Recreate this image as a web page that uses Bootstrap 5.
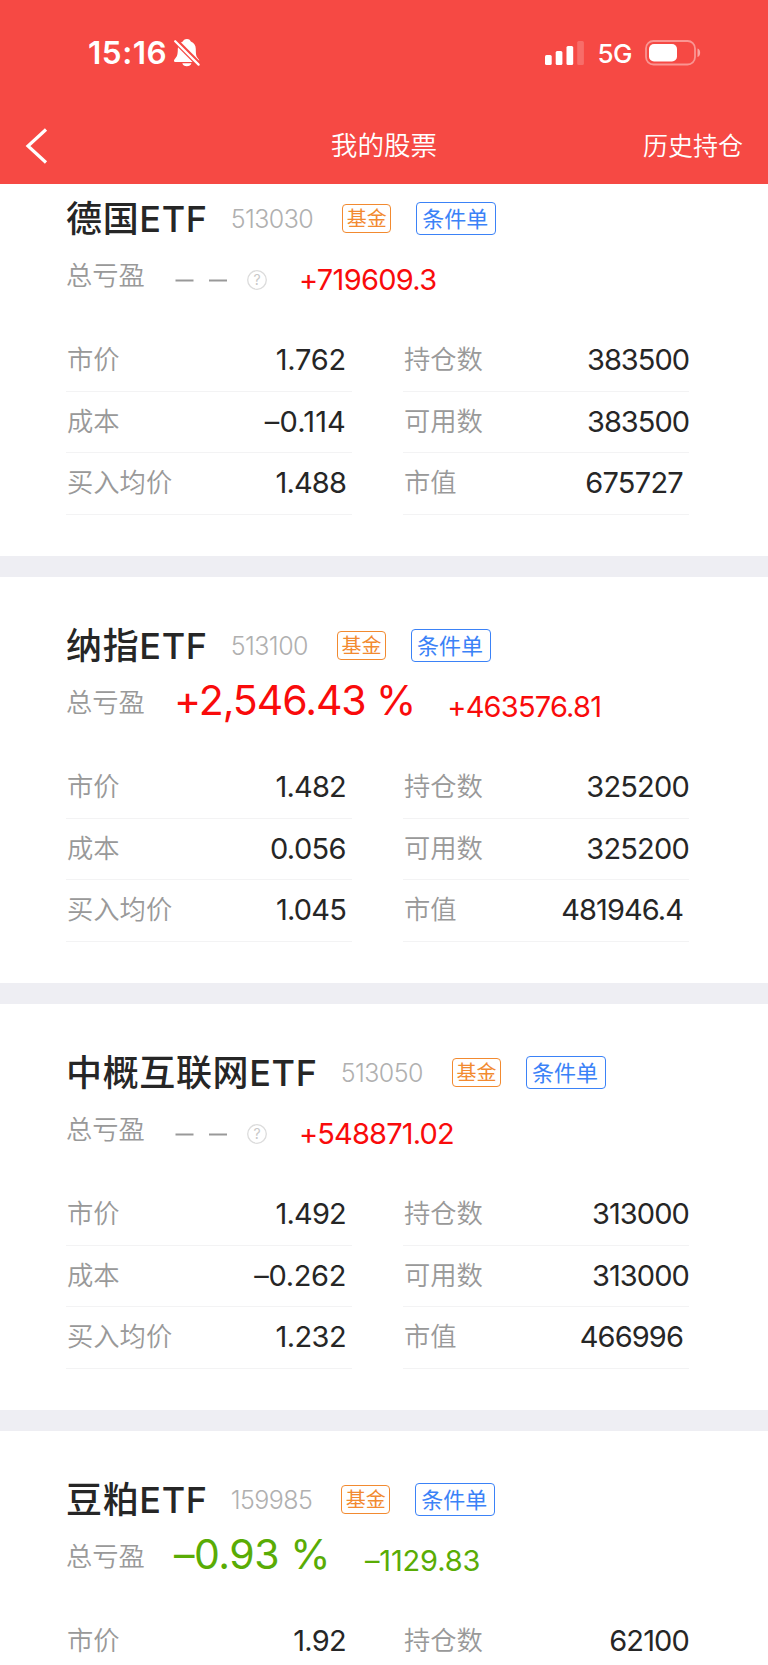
<!DOCTYPE html>
<html lang="zh-CN">
<head>
<meta charset="utf-8">
<meta name="viewport" content="width=device-width, initial-scale=1">
<title>我的股票</title>
<link href="https://cdn.jsdelivr.net/npm/bootstrap@5.3.0/dist/css/bootstrap.min.css" rel="stylesheet">
<style>
body{font-family:Inter,"Noto Sans CJK SC",sans-serif;background:#fff;color:#262626;height:1665px;overflow:hidden}
.app-head{background:#f64944;height:184px;color:#fff}
.status{height:106px;padding:0 67px 0 88px}
.clock{font-size:31.5px;font-weight:600;line-height:40px;letter-spacing:.5px;width:86px;white-space:nowrap}
.net{font-size:26px;font-weight:500;line-height:40px;margin:0 13px 0 13px;letter-spacing:-.5px;padding-top:1px}
.titlebar{height:78px;display:grid;grid-template-columns:1fr auto 1fr;font-family:"Noto Sans CJK SC",sans-serif;font-weight:350;padding:0 25px 2px 25px}
.titlebar h1{font-size:26.6px;font-weight:350;line-height:40px}
.history{font-size:25px;line-height:40px}
#list{height:1481px;overflow:hidden}
.holding{height:427px;border-bottom:21px solid #eeeef3;padding:45px 78px 0 66px}
.holding.cut{height:393px;padding-top:11px}
.name-row{height:46px}
.stock-name{font-size:36px;font-weight:500;line-height:46px;letter-spacing:.65px;padding-top:2px}
.code{font-size:25px;font-weight:300;color:#b0b0b0;line-height:46px;margin-left:23px;letter-spacing:-.55px;padding-top:2px}
.tag{border:1.5px solid;border-radius:4px;font-family:"Noto Sans CJK SC",sans-serif;text-align:center;white-space:nowrap}
.tag-fund{color:#f28a30;width:49px;height:29px;font-size:20px;line-height:26px;margin-left:29px}
.tag-cond{color:#3b82f7;width:80px;height:33px;font-size:22px;line-height:29px;margin-left:25px;padding-right:2px}
.profit{height:89px}
.lbl{font-family:"Noto Sans CJK SC",sans-serif;font-weight:350;font-size:26.3px;color:#999}
.profit .lbl{line-height:40px;margin-top:13px;width:108px}
.pct{font-size:41px;line-height:60px;margin-top:2px;margin-right:35px}
.pct.up{margin-right:32px}
.amt{font-size:29px;line-height:40px;margin-top:19px}
.amt,.val,.pct{letter-spacing:var(--track)}
.up{color:#f90b0b}.down{color:#59ac05}
.nodata{width:124px;height:20px;margin:29px 0 0 1px}
.figures{display:grid;grid-template-columns:286px 286px;column-gap:51px}
.fig{height:61.4px;border-bottom:1.5px solid #f3f3f4}
.figures>.fig:nth-child(-n+2){height:62px}
.fig .lbl{line-height:40px;padding:8px 0 0 1px}
.val{font-size:29px;line-height:40px;padding-top:10px}
.inset{padding-right:6px}
</style>
</head>
<body>
<header class="app-head">
  <div class="status d-flex align-items-center">
    <span class="clock">15:16</span>
    <svg width="27" height="28" viewBox="0 0 27 28"><path fill="#fff" d="M13 0c-2.400 0-3.800 1.400-4.200 2.500-3.500 1.200-5 4.300-5 7.400 0 5.800-.8 7.200-2.200 9C.3 20.500 0 20.800 0 21.800c0 .9.700 1.200 1.500 1.200h22.200c.9 0 1.500-.5 1.500-1.200 0-1-.8-1.700-1.700-3-1.300-1.800-1.700-3.500-1.700-8.900 0-3.100-1.600-6.300-5-7.400C16.500 1.400 15.200 0 13 0ZM8.300 24.300c.4 2 2.200 3 4.500 3s4.200-1 4.600-3Z"/><path d="M1.200 1.500 24.500 25" stroke="#f64944" stroke-width="5.500"/><path d="M1.200 2.200 24.600 25.600" stroke="#fff" stroke-width="2.200" stroke-linecap="round"/></svg>
    <svg class="ms-auto" width="39" height="24" viewBox="0 0 39 24" fill="#fff"><rect y="14" width="6.700" height="10" rx="1.500"/><rect x="10.700" y="10" width="6.700" height="14" rx="1.500"/><rect x="21.500" y="5" width="6.700" height="19" rx="1.500"/><rect x="32.200" width="6.700" height="24" rx="1.500" opacity=".2"/></svg>
    <span class="net">5G</span>
    <svg width="56" height="26" viewBox="0 0 56 26"><rect x="1" y="1" width="49" height="23.500" rx="7.500" fill="none" stroke="#fff" stroke-opacity=".42" stroke-width="1.800"/><rect x="4" y="4" width="28" height="17.500" rx="5" fill="#fff"/><path d="M52.500 8.500c3.500 1 3.500 7.500 0 8.500z" fill="#fff" opacity=".5"/></svg>
  </div>
  <div class="titlebar align-items-center">
    <svg class="mt-1" width="24" height="36" viewBox="0 0 24 36"><path d="M21 1.500 3 18l18 16.500" fill="none" stroke="#fff" stroke-width="3.200"/></svg>
    <h1 class="m-0">我的股票</h1>
    <span class="history text-end">历史持仓</span>
  </div>
</header>
<main id="list"></main>
<script src="https://cdn.jsdelivr.net/npm/bootstrap@5.3.0/dist/js/bootstrap.bundle.min.js"></script>
<script>
// Each figure is [text, tracking in px]
const holdings = [
  {name:'德国ETF', code:'513030', amt:['+719609.3',-.7], dir:'up', l:[['1.762',-.2],['–0.114',.15],['1.488',-.85]], r:[['383500',-1],['383500',-1],['675727',-.75]]},
  {name:'纳指ETF', code:'513100', pct:['+2,546.43 %',-1.05], amt:['+463576.81',-.8], dir:'up', l:[['1.482',-.8],['0.056',-.6],['1.045',-.8]], r:[['325200',-.8],['325200',-.8],['481946.4',-.95]]},
  {name:'中概互联网ETF', code:'513050', amt:['+548871.02',-.85], dir:'up', l:[['1.492',-.8],['–0.262',-.35],['1.232',-.6]], r:[['313000',-.9],['313000',-.9],['466996',-.9]]},
  {name:'豆粕ETF', code:'159985', pct:['–0.93 %',-.5], amt:['–1129.83',-.15], dir:'down', l:[['1.92',-.7]], r:[['62100',-.85]]}
];
const L = ['市价','成本','买入均价'], R = ['持仓数','可用数','市值'];
const nodata = `<svg class="nodata" viewBox="0 0 124 20"><path d="M.5 10.500h18M34 10.500h18" stroke="#999" stroke-width="1.900"/><circle cx="82" cy="10" r="9.300" fill="none" stroke="#dcdcdc" stroke-width="1.300"/><text x="82" y="15" font-size="14" text-anchor="middle" fill="#c8c8c8">?</text></svg>`;
const num = (v, cls) => `<span class="${cls}" style="--track:${v[1]}px">${v[0]}</span>`;
const fig = (label, value, inset) => `<div class="fig d-flex justify-content-between"><span class="lbl">${label}</span>${num(value, inset ? 'val inset' : 'val')}</div>`;
document.getElementById('list').innerHTML = holdings.map((h, i) => `
<section class="holding ${i ? '' : 'cut'}">
  <div class="name-row d-flex align-items-center"><span class="stock-name">${h.name}</span><span class="code">${h.code}</span><span class="tag tag-fund">基金</span><span class="tag tag-cond">条件单</span></div>
  <div class="profit d-flex align-items-start"><span class="lbl">总亏盈</span>${h.pct ? num(h.pct, 'pct ' + h.dir) : nodata}${num(h.amt, 'amt ' + h.dir)}</div>
  <div class="figures">${h.l.map((v, k) => fig(L[k], v, true) + fig(R[k], h.r[k], k === 2)).join('')}</div>
</section>`).join('');
</script>
</body>
</html>
